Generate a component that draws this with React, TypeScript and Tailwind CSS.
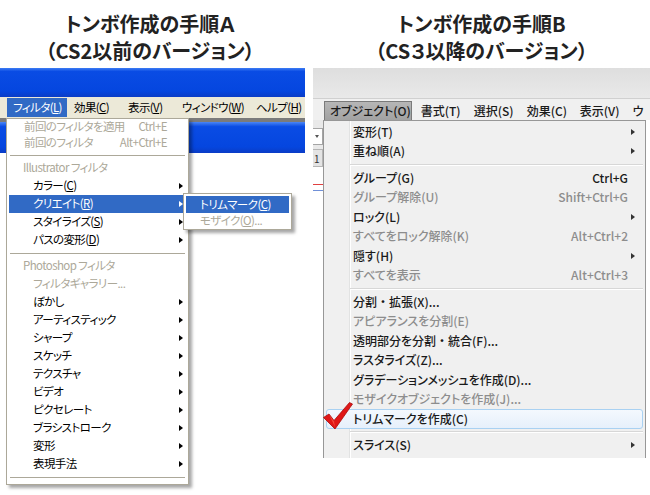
import React from 'react';

const FONT = "font-['Noto_Sans_CJK_JP',sans-serif] [font-feature-settings:'palt']";

type LeftItem =
  | { kind: 'sep' }
  | { kind: 'label'; text: string }
  | { kind: 'item'; text: string; accel?: string; sub?: boolean; dis?: boolean; active?: boolean; shortcut?: string; short?: boolean; pl?: string };

const leftItems: LeftItem[] = [
  { kind: 'item', text: '前回のフィルタを適用', shortcut: 'Ctrl+E', dis: true, short: true, pl: 'pl-[15px]' },
  { kind: 'item', text: '前回のフィルタ', shortcut: 'Alt+Ctrl+E', dis: true, short: true, pl: 'pl-[15px]' },
  { kind: 'sep' },
  { kind: 'label', text: 'Illustrator フィルタ' },
  { kind: 'item', text: 'カラー', accel: 'C', sub: true },
  { kind: 'item', text: 'クリエイト', accel: 'R', sub: true, active: true },
  { kind: 'item', text: 'スタイライズ', accel: 'S', sub: true },
  { kind: 'item', text: 'パスの変形', accel: 'D', sub: true },
  { kind: 'sep' },
  { kind: 'label', text: 'Photoshop フィルタ' },
  { kind: 'item', text: 'フィルタギャラリー...', dis: true },
  { kind: 'item', text: 'ぼかし', sub: true },
  { kind: 'item', text: 'アーティスティック', sub: true },
  { kind: 'item', text: 'シャープ', sub: true },
  { kind: 'item', text: 'スケッチ', sub: true },
  { kind: 'item', text: 'テクスチャ', sub: true },
  { kind: 'item', text: 'ビデオ', sub: true },
  { kind: 'item', text: 'ピクセレート', sub: true },
  { kind: 'item', text: 'ブラシストローク', sub: true },
  { kind: 'item', text: '変形', sub: true },
  { kind: 'item', text: '表現手法', sub: true },
  { kind: 'sep' },
];

type RightItem =
  | { kind: 'sep' }
  | { kind: 'item'; text: string; sub?: boolean; dis?: boolean; shortcut?: string; hl?: boolean };

const rightItems: RightItem[] = [
  { kind: 'item', text: '変形(T)', sub: true },
  { kind: 'item', text: '重ね順(A)', sub: true },
  { kind: 'sep' },
  { kind: 'item', text: 'グループ(G)', shortcut: 'Ctrl+G' },
  { kind: 'item', text: 'グループ解除(U)', shortcut: 'Shift+Ctrl+G', dis: true },
  { kind: 'item', text: 'ロック(L)', sub: true },
  { kind: 'item', text: 'すべてをロック解除(K)', shortcut: 'Alt+Ctrl+2', dis: true },
  { kind: 'item', text: '隠す(H)', sub: true },
  { kind: 'item', text: 'すべてを表示', shortcut: 'Alt+Ctrl+3', dis: true },
  { kind: 'sep' },
  { kind: 'item', text: '分割・拡張(X)...' },
  { kind: 'item', text: 'アピアランスを分割(E)', dis: true },
  { kind: 'item', text: '透明部分を分割・統合(F)...' },
  { kind: 'item', text: 'ラスタライズ(Z)...' },
  { kind: 'item', text: 'グラデーションメッシュを作成(D)...' },
  { kind: 'item', text: 'モザイクオブジェクトを作成(J)...', dis: true },
  { kind: 'item', text: 'トリムマークを作成(C)', hl: true },
  { kind: 'sep' },
  { kind: 'item', text: 'スライス(S)', sub: true },
];

// keep the middle dot full width, as in the original menu
function MenuText({ text }: { text: string }) {
  const parts = text.split('・');
  return (
    <>
      {parts.map((p, i) => (
        <React.Fragment key={i}>
          {i > 0 && <span className="[font-feature-settings:normal]">・</span>}
          {p}
        </React.Fragment>
      ))}
    </>
  );
}

function Arrow({ color = 'border-l-black' }: { color?: string }) {
  return <span className={`block w-0 h-0 border-y-[3.5px] border-y-transparent border-l-[4px] ${color}`} />;
}

function Title({ lines, width }: { lines: string[]; width: string }) {
  return (
    <div className={`${width} h-[68px] pt-[10px] flex flex-col items-center text-[20px] leading-[27px] font-bold text-[#222]`}>
      {lines.map((l) => (
        <div key={l}>{l}</div>
      ))}
    </div>
  );
}

function LeftPanel() {
  const menu = [
    { t: 'フィルタ', k: 'L', w: 'w-[60px] pl-[6px]', on: true },
    { t: '効果', k: 'C', w: 'w-[54px] pl-[7px]' },
    { t: '表示', k: 'V', w: 'w-[54px] pl-[7px]' },
    { t: 'ウィンドウ', k: 'W', w: 'w-[74px] pl-[7px]' },
    { t: 'ヘルプ', k: 'H', w: 'w-[56px] pl-[7px]' },
  ];
  return (
    <div className="w-[313px] flex flex-col">
      <Title lines={['トンボ作成の手順Ａ', '（CS2以前のバージョン）']} width="w-[300px]" />
      <div className="relative w-[305px] flex-1 text-[11.5px] tracking-[-0.6px]">
        <div className="h-[29px] bg-[linear-gradient(#3d7cf4,#0a4ce4_12%,#0546df_80%,#0a3cc6)]" />
        <div className="h-[21px] bg-[#ece9d8] pl-[7px] flex items-center overflow-hidden">
          {menu.map((m) => (
            <div
              key={m.t}
              className={`${m.w} h-[19px] shrink-0 flex items-center whitespace-nowrap ${m.on ? 'bg-[#316ac5] text-white' : 'text-black'}`}
            >
              {m.t}(<u>{m.k}</u>)
            </div>
          ))}
        </div>
        <div className="h-[4px] bg-[#7b7b7b]" />
        <div className="h-[31px] bg-[linear-gradient(#4a86f6,#0a4ce4_15%,#0546df_80%,#0a3cc6)]" />

        <div className="absolute left-[6px] top-[50px] w-[183px] bg-white border border-[#aca899] px-[2px] pb-[3px] shadow-[3px_3px_3px_rgba(0,0,0,0.35)]">
          {leftItems.map((it, i) => {
            if (it.kind === 'sep')
              return (
                <div key={i} className="h-[8px] flex items-center px-[1px]">
                  <div className="w-full h-px bg-[#aca899]" />
                </div>
              );
            if (it.kind === 'label')
              return (
                <div key={i} className="h-[18px] flex items-center pl-[14px] text-[#aca899]">
                  {it.text}
                </div>
              );
            return (
              <div
                key={i}
                className={`${it.short ? 'h-[16px]' : 'h-[18px]'} flex items-center ${it.pl ?? 'pl-[24px]'} pr-[3px] whitespace-nowrap ${
                  it.active ? 'bg-[#316ac5] text-white' : it.dis ? 'text-[#aca899]' : 'text-black'
                }`}
              >
                <span className="flex-1">
                  {it.text}
                  {it.accel && (
                    <>
                      (<u>{it.accel}</u>)
                    </>
                  )}
                </span>
                {it.shortcut && <span className="pr-[16px]">{it.shortcut}</span>}
                {it.sub && <Arrow color={it.active ? 'border-l-white' : 'border-l-black'} />}
              </div>
            );
          })}
        </div>

        <div className="absolute left-[183px] top-[125px] w-[109px] bg-white border border-[#aca899] px-[2px] pt-[2px] shadow-[3px_3px_3px_rgba(0,0,0,0.35)]">
          <div className="h-[17px] flex items-center pl-[14px] bg-[#316ac5] text-white whitespace-nowrap">
            トリムマーク(<u>C</u>)
          </div>
          <div className="h-[16px] flex items-center pl-[14px] text-[#aca899] whitespace-nowrap">
            モザイク(<u>O</u>)...
          </div>
        </div>
      </div>
    </div>
  );
}

function CheckMark() {
  return (
    <svg width="30" height="28" viewBox="0 0 30 28" className="absolute left-[10px] top-[334px]">
      <path d="M0.5 15.5 L6 12 L11 18.5 L26.5 0.5 L29.5 2 L12 27 Z" fill="#e01818" stroke="#a80e0e" strokeWidth="0.8" />
      <path d="M6 12.6 L11 19.5 L12 25 Z" fill="#ff6a5a" opacity="0.6" />
    </svg>
  );
}

function RightPanel() {
  const bar = ['書式(T)', '選択(S)', '効果(C)', '表示(V)', 'ウ'];
  return (
    <div className="w-[337px] flex flex-col">
      <Title lines={['トンボ作成の手順B', '（CS３以降のバージョン）']} width="w-[337px]" />
      <div className="relative h-[390px] flex flex-col bg-[#f0f0f0] text-[12px] font-medium overflow-hidden">
        <div className="h-[31px] bg-[linear-gradient(#dedede,#e9e9e9)] border-b border-[#d0d0d0]" />
        <div className="h-[21px] pl-[11px] flex items-end whitespace-nowrap text-[#1a1a1a]">
          <div className="w-[94px] h-[19px] pl-[5px] flex items-center bg-[linear-gradient(#b6b6b6,#a2a2a2)] border border-[#7a7a7a] border-b-0">
            オブジェクト(O)
          </div>
          {bar.map((b) => (
            <div key={b} className="w-[53px] h-[19px] pl-[9px] flex items-center shrink-0">
              {b}
            </div>
          ))}
        </div>
        <div className="flex flex-1">
          <div className="w-[10px] flex flex-col bg-white">
            <div className="h-[8px] bg-[#e9e9e9]" />
            <div className="h-[17px] bg-white border border-[#a5a5a5] border-l-0 flex items-center pl-[2px]">
              <span className="block w-0 h-0 border-x-[2.5px] border-x-transparent border-t-[3px] border-t-[#555]" />
            </div>
            <div className="h-[4px] bg-[#e9e9e9]" />
            <div className="h-[18px] bg-[#e4e4e4] border border-[#b5b5b5] border-l-0 flex items-center pl-[1px] text-[10px] font-normal text-[#333]">
              1
            </div>
            <div className="h-[17px]" />
            <div className="h-px bg-[#e04040]" />
            <div className="h-[5px]" />
            <div className="h-px bg-[#7090d8]" />
          </div>
          <div className="w-[323px] border border-b-0 border-[#979797] pt-px bg-[linear-gradient(to_right,#f0f0f0_25px,#e2e3e3_25px,#e2e3e3_26px,#ffffff_26px,#ffffff_27px,#f0f0f0_27px)]">
            {rightItems.map((it, i) => {
              if (it.kind === 'sep')
                return (
                  <div key={i} className="h-[7px] flex items-center pl-[26px] pr-[2px]">
                    <div className="w-full h-[2px] border-t border-[#d7d7d7] border-b border-b-white" />
                  </div>
                );
              const color = it.dis ? 'text-[#8d8d8d]' : 'text-[#1a1a1a]';
              if (it.hl)
                return (
                  <div key={i} className="h-[19.5px] px-[2px]">
                    <div className={`h-full flex items-center pl-[26px] rounded-[3px] border border-[#a9d1f2] bg-[linear-gradient(#f4f9fe,#e6f0fb)] ${color} whitespace-nowrap`}>
                      <MenuText text={it.text} />
                    </div>
                  </div>
                );
              return (
                <div key={i} className={`h-[19.5px] flex items-center pl-[29px] whitespace-nowrap ${color}`}>
                  <span className="flex-1">
                    <MenuText text={it.text} />
                  </span>
                  {it.shortcut && <span className="pr-[17px]">{it.shortcut}</span>}
                  {it.sub && (
                    <span className="pr-[10px]">
                      <Arrow color="border-l-[#333]" />
                    </span>
                  )}
                </div>
              );
            })}
          </div>
          <div className="w-[4px] bg-white" />
        </div>
        <CheckMark />
      </div>
      <div className="flex-1 bg-white" />
    </div>
  );
}

export default function App() {
  return (
    <div className={`w-[650px] h-[495px] bg-white flex overflow-hidden ${FONT}`}>
      <LeftPanel />
      <RightPanel />
    </div>
  );
}
